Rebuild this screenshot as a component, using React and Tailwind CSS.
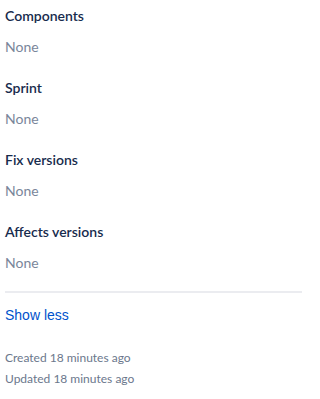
import React from "react";

const fields = ["Components", "Sprint", "Fix versions", "Affects versions"];

export default function App() {
  return (
    <div className="w-[314px] h-[399px] bg-white px-[5px] pt-[6px] font-['Lato',sans-serif]">
      <div className="w-[297px]">
        {fields.map((f) => (
          <div key={f} className="mb-[21px]">
            <div className="text-[14px] leading-[20px] font-semibold text-[#172b4d]">{f}</div>
            <div className="mt-[11px] text-[14px] leading-[20px] text-[#7a869a]">None</div>
          </div>
        ))}
        <div className="-mt-[3px] h-[2px] bg-[#ebecf0]" />
        <div className="mt-[12px] text-[14px] leading-[20px] text-[#0052cc] font-['Liberation_Sans',sans-serif]">
          Show less
        </div>
        <div className="mt-[22px] text-[12px] leading-[21px] text-[#6b778c]">
          <div>Created 18 minutes ago</div>
          <div>Updated 18 minutes ago</div>
        </div>
      </div>
    </div>
  );
}
